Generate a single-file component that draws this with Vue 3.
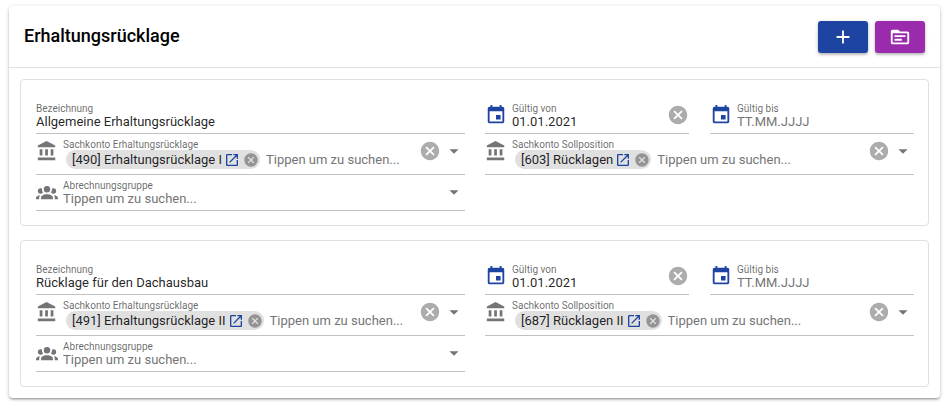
<template>
  <section class="card">
    <header class="card-header">
      <h2 class="card-title">Erhaltungsrücklage</h2>
      <div class="card-actions">
        <button type="button" class="btn btn-primary" aria-label="Hinzufügen" @click="addEntry">
          <svg class="icon" viewBox="0 0 24 24"><path :d="icons.add" /></svg>
        </button>
        <button type="button" class="btn btn-secondary" aria-label="Vorlagen">
          <svg class="icon" viewBox="0 0 24 24"><path :d="icons.source" /></svg>
        </button>
      </div>
    </header>

    <div class="card-body">
      <div v-for="entry in entries" :key="entry.id" class="entry">
        <!-- Linke Spalte -->
        <div class="column">
          <div class="field field-first">
            <div class="control">
              <label class="label" :for="`name-${entry.id}`">Bezeichnung</label>
              <input :id="`name-${entry.id}`" v-model="entry.name" class="input" type="text" />
            </div>
          </div>

          <div class="field">
            <svg class="icon prepend" viewBox="0 0 24 24"><path :d="icons.bank" /></svg>
            <div class="control">
              <label class="label" :for="`account-${entry.id}`">Sachkonto Erhaltungsrücklage</label>
              <div class="chip-row">
                <span v-if="entry.account" class="chip">
                  {{ entry.account }}
                  <a href="#" class="chip-link" aria-label="Sachkonto öffnen">
                    <svg class="icon-small" viewBox="0 0 24 24"><path :d="icons.open" /></svg>
                  </a>
                  <button type="button" class="chip-remove" aria-label="Entfernen" @click="entry.account = ''">
                    <svg class="icon-small" viewBox="0 0 24 24"><path :d="icons.cancel" /></svg>
                  </button>
                </span>
                <input :id="`account-${entry.id}`" class="input" type="text" :placeholder="searchHint" />
              </div>
            </div>
            <button type="button" class="append clear" aria-label="Leeren" @click="entry.account = ''">
              <svg class="icon" viewBox="0 0 24 24"><path :d="icons.cancel" /></svg>
            </button>
            <button type="button" class="append" aria-label="Auswahl öffnen">
              <svg class="icon" viewBox="0 0 24 24"><path :d="icons.arrow" /></svg>
            </button>
          </div>

          <div class="field">
            <svg class="icon prepend" viewBox="0 0 24 24"><path :d="icons.groups" /></svg>
            <div class="control">
              <label class="label" :for="`group-${entry.id}`">Abrechnungsgruppe</label>
              <input :id="`group-${entry.id}`" v-model="entry.group" class="input" type="text" :placeholder="searchHint" />
            </div>
            <button type="button" class="append" aria-label="Auswahl öffnen">
              <svg class="icon" viewBox="0 0 24 24"><path :d="icons.arrow" /></svg>
            </button>
          </div>
        </div>

        <!-- Rechte Spalte -->
        <div class="column">
          <div class="dates">
            <div class="field field-first">
              <svg class="icon prepend date-icon" viewBox="0 0 24 24"><path :d="icons.event" /></svg>
              <div class="control">
                <label class="label" :for="`from-${entry.id}`">Gültig von</label>
                <input :id="`from-${entry.id}`" v-model="entry.from" class="input" type="text" placeholder="TT.MM.JJJJ" />
              </div>
              <button v-if="entry.from" type="button" class="append clear" aria-label="Leeren" @click="entry.from = ''">
                <svg class="icon" viewBox="0 0 24 24"><path :d="icons.cancel" /></svg>
              </button>
            </div>
            <div class="field field-first">
              <svg class="icon prepend date-icon" viewBox="0 0 24 24"><path :d="icons.event" /></svg>
              <div class="control">
                <label class="label" :for="`to-${entry.id}`">Gültig bis</label>
                <input :id="`to-${entry.id}`" v-model="entry.to" class="input" type="text" placeholder="TT.MM.JJJJ" />
              </div>
            </div>
          </div>

          <div class="field">
            <svg class="icon prepend" viewBox="0 0 24 24"><path :d="icons.bank" /></svg>
            <div class="control">
              <label class="label" :for="`target-${entry.id}`">Sachkonto Sollposition</label>
              <div class="chip-row">
                <span v-if="entry.target" class="chip">
                  {{ entry.target }}
                  <a href="#" class="chip-link" aria-label="Sachkonto öffnen">
                    <svg class="icon-small" viewBox="0 0 24 24"><path :d="icons.open" /></svg>
                  </a>
                  <button type="button" class="chip-remove" aria-label="Entfernen" @click="entry.target = ''">
                    <svg class="icon-small" viewBox="0 0 24 24"><path :d="icons.cancel" /></svg>
                  </button>
                </span>
                <input :id="`target-${entry.id}`" class="input" type="text" :placeholder="searchHint" />
              </div>
            </div>
            <button type="button" class="append clear" aria-label="Leeren" @click="entry.target = ''">
              <svg class="icon" viewBox="0 0 24 24"><path :d="icons.cancel" /></svg>
            </button>
            <button type="button" class="append" aria-label="Auswahl öffnen">
              <svg class="icon" viewBox="0 0 24 24"><path :d="icons.arrow" /></svg>
            </button>
          </div>
        </div>
      </div>
    </div>
  </section>
</template>

<script setup>
import { ref } from 'vue'

const searchHint = 'Tippen um zu suchen...'

const entries = ref([
  {
    id: 1,
    name: 'Allgemeine Erhaltungsrücklage',
    account: '[490] Erhaltungsrücklage I',
    target: '[603] Rücklagen',
    group: '',
    from: '01.01.2021',
    to: ''
  },
  {
    id: 2,
    name: 'Rücklage für den Dachausbau',
    account: '[491] Erhaltungsrücklage II',
    target: '[687] Rücklagen II',
    group: '',
    from: '01.01.2021',
    to: ''
  }
])

const addEntry = () => {
  entries.value.push({
    id: entries.value.length + 1,
    name: '',
    account: '',
    target: '',
    group: '',
    from: '',
    to: ''
  })
}

// Icon-Pfade (24er Raster)
const icons = {
  add: 'M19 13h-6v6h-2v-6H5v-2h6V5h2v6h6v2z',
  source: 'M20 6h-8l-2-2H4c-1.1 0-2 .9-2 2v12c0 1.1.9 2 2 2h16c1.1 0 2-.9 2-2V8c0-1.1-.9-2-2-2zm0 12H4V8h16v10zm-2-6H6v-2h12v2zm-4 4H6v-2h8v2z',
  bank: 'M4 10v7h3v-7H4zm6 0v7h3v-7h-3zM2 22h19v-3H2v3zm14-12v7h3v-7h-3zm-4.5-9L2 6v2h19V6l-9.5-5z',
  groups: 'M12 5.5A3.5 3.5 0 0 1 15.5 9 3.5 3.5 0 0 1 12 12.5 3.5 3.5 0 0 1 8.5 9 3.5 3.5 0 0 1 12 5.5M5 8c.56 0 1.08.15 1.53.42-.15 1.43.27 2.85 1.13 3.96C7.16 13.34 6.16 14 5 14a3 3 0 0 1-3-3 3 3 0 0 1 3-3m14 0a3 3 0 0 1 3 3 3 3 0 0 1-3 3c-1.16 0-2.16-.66-2.66-1.62.86-1.11 1.28-2.53 1.13-3.96.45-.27.97-.42 1.53-.42M5.5 18.25c0-2.07 2.91-3.75 6.5-3.75s6.5 1.68 6.5 3.75V20h-13v-1.75M0 20v-1.5c0-1.39 1.89-2.56 4.45-2.9-.59.68-.95 1.62-.95 2.65V20H0m24 0h-3.5v-1.75c0-1.03-.36-1.97-.95-2.65 2.56.34 4.45 1.51 4.45 2.9V20z',
  event: 'M17 12h-5v5h5v-5zM16 1v2H8V1H6v2H5c-1.11 0-1.99.9-1.99 2L3 19c0 1.1.89 2 2 2h14c1.1 0 2-.9 2-2V5c0-1.1-.9-2-2-2h-1V1h-2zm3 18H5V8h14v11z',
  open: 'M19 19H5V5h7V3H5c-1.11 0-2 .9-2 2v14c0 1.1.89 2 2 2h14c1.1 0 2-.9 2-2v-7h-2v7zM14 3v2h3.59l-9.83 9.83 1.41 1.41L19 6.41V10h2V3h-7z',
  cancel: 'M12 2C6.47 2 2 6.47 2 12s4.47 10 10 10 10-4.47 10-10S17.53 2 12 2zm5 13.59L15.59 17 12 13.41 8.41 17 7 15.59 10.59 12 7 8.41 8.41 7 12 10.59 15.59 7 17 8.41 13.41 12 17 15.59z',
  arrow: 'M7 10l5 5 5-5z'
}
</script>

<style>
body {
  margin: 0;
  background: #fff;
}
</style>

<style scoped>
.card {
  margin: 6px 6px 9px 9px;
  border-radius: 4px;
  background: #fff;
  box-shadow: 0 1px 4px rgba(0, 0, 0, 0.2), 0 2px 2px rgba(0, 0, 0, 0.14), 0 2px 1px -1px rgba(0, 0, 0, 0.12);
  font-family: Roboto, "Liberation Sans", sans-serif;
  font-size: 13px;
  color: rgba(0, 0, 0, 0.87);
}

.card-header {
  display: flex;
  align-items: flex-start;
  justify-content: space-between;
  padding: 15px 15px 14px;
  border-bottom: 1px solid #e0e0e0;
}

.card-title {
  margin: 0;
  font-size: 18px;
  line-height: 30px;
  font-weight: 500;
  color: #000;
}

.card-actions {
  display: flex;
  gap: 7px;
}

/* Schaltflächen */
button {
  padding: 0;
  border: none;
  background: none;
  color: inherit;
  cursor: pointer;
}

.btn {
  display: flex;
  align-items: center;
  padding: 5px 14px;
  border-radius: 3px;
  color: #fff;
  box-shadow: 0 1px 4px rgba(0, 0, 0, 0.2), 0 2px 2px rgba(0, 0, 0, 0.14);
}

.btn-primary {
  background: #1e44a1;
}

.btn-secondary {
  background: #992bac;
}

.icon {
  display: block;
  flex: none;
  width: 22px;
  height: 22px;
  fill: currentColor;
}

.icon-small {
  display: block;
  width: 16px;
  height: 16px;
  fill: currentColor;
}

/* Einträge */
.card-body {
  display: flex;
  flex-direction: column;
  gap: 14px;
  padding: 11px;
}

.entry {
  display: grid;
  grid-template-columns: 1fr 1fr;
  gap: 20px;
  padding: 17px 14px 14px 15px;
  border: 1px solid #e0e0e0;
  border-radius: 4px;
}

.column {
  min-width: 0;
}

.dates {
  display: grid;
  grid-template-columns: 1fr 1fr;
  gap: 21px;
}

/* Felder */
.field {
  display: flex;
  align-items: flex-start;
  padding: 5px 0 3px;
  border-bottom: 1px solid #c2c2c2;
}

.field-first {
  padding-top: 6px;
}

.control {
  flex: 1;
  min-width: 0;
}

.label {
  display: block;
  font-size: 10px;
  line-height: 11px;
  color: rgba(0, 0, 0, 0.6);
}

.input {
  display: block;
  flex: 1;
  box-sizing: border-box;
  width: 100%;
  min-width: 0;
  height: 16px;
  padding: 0;
  border: none;
  outline: none;
  background: none;
  font: inherit;
  line-height: 16px;
  color: inherit;
}

.input::placeholder {
  color: #757575;
  opacity: 1;
}

.prepend {
  margin: 1px 5px 0 0;
  color: #757575;
}

.date-icon {
  color: #1e44a1;
}

.append {
  margin-top: 1px;
  color: #757575;
}

.clear {
  margin-right: 2px;
  color: #acacac;
}

.dates .clear {
  margin-right: 0;
}

/* Chips */
.chip-row {
  display: flex;
  align-items: center;
  gap: 6px;
  padding: 0 0 2px 3px;
}

.chip {
  display: flex;
  align-items: center;
  height: 19px;
  padding: 0 1px 0 6px;
  border-radius: 10px;
  background: #e0e0e0;
  white-space: nowrap;
}

.chip-link {
  margin: 0 3px 0 2px;
  color: #1e44a1;
}

.chip-remove {
  color: #949494;
}
</style>
